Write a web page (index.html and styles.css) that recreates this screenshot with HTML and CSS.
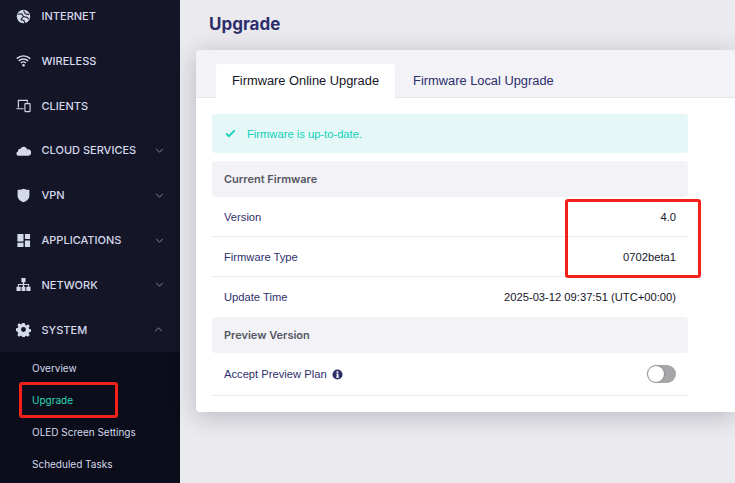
FILE: index.html
```html
<!DOCTYPE html>
<html lang="en">
<head>
  <meta charset="UTF-8">
  <meta name="viewport" content="width=device-width, initial-scale=1.0">
  <title>Upgrade</title>
  <link rel="stylesheet" href="styles.css">
</head>
<body>
  <div class="layout">
    <div class="sidebar">
      <div class="menu">
        <div class="menu-item">
          <svg class="menu-icon" viewBox="0 0 16 16"><circle cx="8" cy="8" r="7.200" fill="#d5d9ec"/><path d="M2 5.500l4-.5 2 3-3 3.500M8 1.500l2 3.500 4 1M8 8l4 1 1.500 2M5.500 11.500l3 1 1 2.500" fill="none" stroke="#141627" stroke-width="1.100"/></svg>
          <span class="menu-label">INTERNET</span>
        </div>
        <div class="menu-item">
          <svg class="menu-icon" viewBox="0 0 16 16"><path d="M.8 6a10.400 10.400 0 0 1 14.400 0M3 8.400a7.200 7.200 0 0 1 10 0M5.300 10.700a4 4 0 0 1 5.400 0" fill="none" stroke="#d5d9ec" stroke-width="1.500"/><circle cx="8" cy="13" r="1.400" fill="#d5d9ec"/></svg>
          <span class="menu-label">WIRELESS</span>
        </div>
        <div class="menu-item">
          <svg class="menu-icon" viewBox="0 0 16 16"><path d="M2.500 10.500V2.500h9.500V5M.5 11.500h7.500" fill="none" stroke="#d5d9ec" stroke-width="1.200"/><rect x="9.500" y="6" width="5.500" height="8.500" rx=".6" fill="none" stroke="#d5d9ec" stroke-width="1.200"/></svg>
          <span class="menu-label">CLIENTS</span>
        </div>
        <div class="menu-item">
          <svg class="menu-icon" viewBox="0 0 16 16"><path d="M2.500 13.500a2.300 2.300 0 0 1-.4-4.500 2.700 2.700 0 0 1 2.600-3A4 4 0 0 1 12 6.800a3.400 3.400 0 0 1 1.500 6.700z" fill="#d5d9ec"/></svg>
          <span class="menu-label">CLOUD SERVICES</span>
          <svg class="arrow" viewBox="0 0 10 6"><path d="M1 1l4 4 4-4" fill="none" stroke="#8f94a8" stroke-width="1.100"/></svg>
        </div>
        <div class="menu-item">
          <svg class="menu-icon" viewBox="0 0 16 16"><path d="M8 .8c2.200.9 4.200 1.200 6.300 1.300v6.200c0 3.200-2.800 5.800-6.300 7-3.500-1.200-6.300-3.800-6.300-7V2.100C3.800 2 5.800 1.700 8 .8z" fill="#d5d9ec"/></svg>
          <span class="menu-label">VPN</span>
          <svg class="arrow" viewBox="0 0 10 6"><path d="M1 1l4 4 4-4" fill="none" stroke="#8f94a8" stroke-width="1.100"/></svg>
        </div>
        <div class="menu-item">
          <svg class="menu-icon" viewBox="0 0 16 16"><path d="M1.500 1h6.500v8H1.500zM9.500 1H15v5.500H9.500zM1.500 10.500H8V15H1.500zM9.500 8H15v7H9.500z" fill="#d5d9ec"/></svg>
          <span class="menu-label">APPLICATIONS</span>
          <svg class="arrow" viewBox="0 0 10 6"><path d="M1 1l4 4 4-4" fill="none" stroke="#8f94a8" stroke-width="1.100"/></svg>
        </div>
        <div class="menu-item">
          <svg class="menu-icon" viewBox="0 0 16 16"><path d="M5.800 1h4.400v4.500H8.700v2h5.300v3h1.500V15h-4.500v-4.500H13V8.500H8.700v2h1.300V15H6v-4.500h1.300v-2H3v2h2V15H.5v-4.500H2v-3h5.300v-2H5.800z" fill="#d5d9ec"/></svg>
          <span class="menu-label">NETWORK</span>
          <svg class="arrow" viewBox="0 0 10 6"><path d="M1 1l4 4 4-4" fill="none" stroke="#8f94a8" stroke-width="1.100"/></svg>
        </div>
        <div class="menu-item">
          <svg class="menu-icon" viewBox="0 0 16 16"><path d="M6.700 1h2.600l.4 2 1.300.6 1.800-1.100 1.800 1.800-1.100 1.800.6 1.300 1.900.4v2.600l-1.900.4-.6 1.300 1.100 1.800-1.800 1.800-1.800-1.100-1.300.6-.4 1.900H6.700l-.4-1.900-1.300-.6-1.800 1.100-1.800-1.800 1.100-1.800-.6-1.300L0 9.300V6.700l1.900-.4.600-1.300-1.100-1.800 1.800-1.800L5 2.500l1.300-.6z" fill="#d5d9ec"/><circle cx="8" cy="8" r="2.600" fill="#141627"/></svg>
          <span class="menu-label">SYSTEM</span>
          <svg class="arrow arrow-open" viewBox="0 0 10 6"><path d="M1 5l4-4 4 4" fill="none" stroke="#8f94a8" stroke-width="1.100"/></svg>
        </div>
      </div>
      <div class="submenu">
        <div class="submenu-item">Overview</div>
        <div class="submenu-item active">Upgrade</div>
        <div class="submenu-item">OLED Screen Settings</div>
        <div class="submenu-item">Scheduled Tasks</div>
      </div>
      <div class="mark mark-menu"></div>
    </div>

    <div class="main">
      <h1 class="page-title">Upgrade</h1>
      <div class="card">
        <div class="tabs">
          <div class="tab active">Firmware Online Upgrade</div>
          <div class="tab">Firmware Local Upgrade</div>
        </div>
        <div class="card-body">
          <div class="alert">
            <svg class="alert-icon" viewBox="0 0 12 10"><path d="M1.200 5l3 3 6.500-6.500" fill="none" stroke="#0fd0ba" stroke-width="2"/></svg>
            <span>Firmware is up-to-date.</span>
          </div>
          <div class="section-head">Current Firmware</div>
          <div class="row"><span>Version</span><span class="value">4.0</span></div>
          <div class="row"><span>Firmware Type</span><span class="value">0702beta1</span></div>
          <div class="row no-line"><span>Update Time</span><span class="value">2025-03-12 09:37:51 (UTC+00:00)</span></div>
          <div class="section-head">Preview Version</div>
          <div class="row preview-row">
            <span class="with-info">Accept Preview Plan
              <svg class="info" viewBox="0 0 12 12"><circle cx="6" cy="6" r="5.500" fill="#2d2f6b"/><path d="M5 2.500h2v1.500H5zM4.800 5h2.200v3.500h.6v1H4.500v-1h.6V6h-.3z" fill="#fff"/></svg>
            </span>
            <span class="switch"><span class="knob"></span></span>
          </div>
        </div>
      </div>
      <div class="mark mark-values"></div>
    </div>
  </div>
</body>
</html>
```

FILE: styles.css
```css
body {
  margin: 0;
  overflow: hidden;
  font-family: 'Liberation Sans', sans-serif;
  font-size: 11.2px;
  background-color: #eaeaef;
}
.layout {
  display: flex;
  height: 483px;
  overflow: hidden;
}
.sidebar {
  position: relative;
  width: 180px;
  flex-shrink: 0;
  background-color: #141627;
  overflow: hidden;
}
.menu {
  margin-top: -6.350px;
}
.menu-item {
  display: flex;
  align-items: center;
  height: 44.800px;
  padding-left: 16px;
  font-family: 'Inter', sans-serif;
  font-size: 11px;
  font-weight: 500;
  color: #d5d9ec;
}
.menu-icon {
  width: 15px;
  height: 15px;
  margin-right: 10.500px;
  flex-shrink: 0;
}
.menu-label {
  flex: 1;
}
.arrow {
  width: 9px;
  height: 5px;
  margin-right: 16px;
}
.arrow-open {
  margin-right: 17px;
}
.submenu {
  height: 140px;
  background-color: #0c0d1b;
}
.submenu-item {
  display: flex;
  align-items: center;
  height: 32px;
  padding-left: 32px;
  font-family: 'Inter', sans-serif;
  font-size: 10px;
  color: #d5d9ec;
}
.submenu-item.active {
  color: #2ed8b6;
}
.mark {
  position: absolute;
  box-sizing: border-box;
  border: 3px solid #f5201a;
  border-radius: 3px;
}
.mark-menu {
  left: 19px;
  top: 382px;
  width: 99px;
  height: 36px;
}
.mark-values {
  left: 385px;
  top: 199px;
  width: 136px;
  height: 79px;
}
.main {
  position: relative;
  flex: 1;
  min-width: 0;
}
.page-title {
  margin: 13px 0 15px 29px;
  font-family: 'Inter', sans-serif;
  font-size: 17px;
  line-height: 22px;
  font-weight: 700;
  color: #2d2f6b;
}
.card {
  width: 539px;
  margin-left: 16px;
  height: 362px;
  background-color: #ffffff;
  border-radius: 4px 0 0 4px;
  box-shadow: 0 4px 24px rgba(20, 22, 39, 0.24);
}
.tabs {
  display: flex;
  gap: 1px;
  height: 48px;
  box-sizing: border-box;
  padding: 14px 0 0 20px;
  background-color: #f2f2f7;
  border-bottom: 1px solid #e6e6ec;
  border-radius: 4px 0 0 0;
}
.tab {
  height: 34px;
  padding: 0 17px;
  font-size: 12.850px;
  line-height: 34px;
  color: #2d2f6b;
  white-space: nowrap;
}
.tab.active {
  padding: 0 16px;
  background-color: #ffffff;
  color: #141627;
  border-radius: 3px 3px 0 0;
}
.card-body {
  width: 476px;
  padding: 16px 0 0 16px;
}
.alert {
  display: flex;
  align-items: center;
  height: 39px;
  margin-bottom: 8px;
  padding-left: 13px;
  background-color: #e5f8f7;
  border-radius: 4px;
  color: #0fd0ba;
}
.alert-icon {
  width: 11px;
  height: 9px;
  margin-right: 11px;
}
.section-head {
  display: flex;
  align-items: center;
  height: 36px;
  padding-left: 12px;
  background-color: #f2f2f7;
  border-radius: 4px;
  font-family: 'Inter', sans-serif;
  font-size: 11px;
  font-weight: 600;
  color: #55565f;
}
.row {
  display: flex;
  align-items: center;
  justify-content: space-between;
  height: 39px;
  padding: 0 12px;
  border-bottom: 1px solid #e9e9ee;
  color: #2d2f6b;
}
.row.no-line {
  border-bottom: none;
  height: 40px;
}
.row.preview-row {
  height: 42px;
}
.value {
  color: #141627;
}
.with-info {
  display: flex;
  align-items: center;
  gap: 5px;
}
.info {
  width: 11px;
  height: 11px;
}
.switch {
  position: relative;
  display: block;
  width: 29px;
  height: 18px;
  background-color: #a6a6a8;
  border-radius: 9px;
}
.knob {
  position: absolute;
  left: 1px;
  top: 1px;
  width: 16px;
  height: 16px;
  background-color: #ffffff;
  border-radius: 50%;
  box-shadow: 0 0 2px rgba(0, 0, 0, 0.4);
}
```
